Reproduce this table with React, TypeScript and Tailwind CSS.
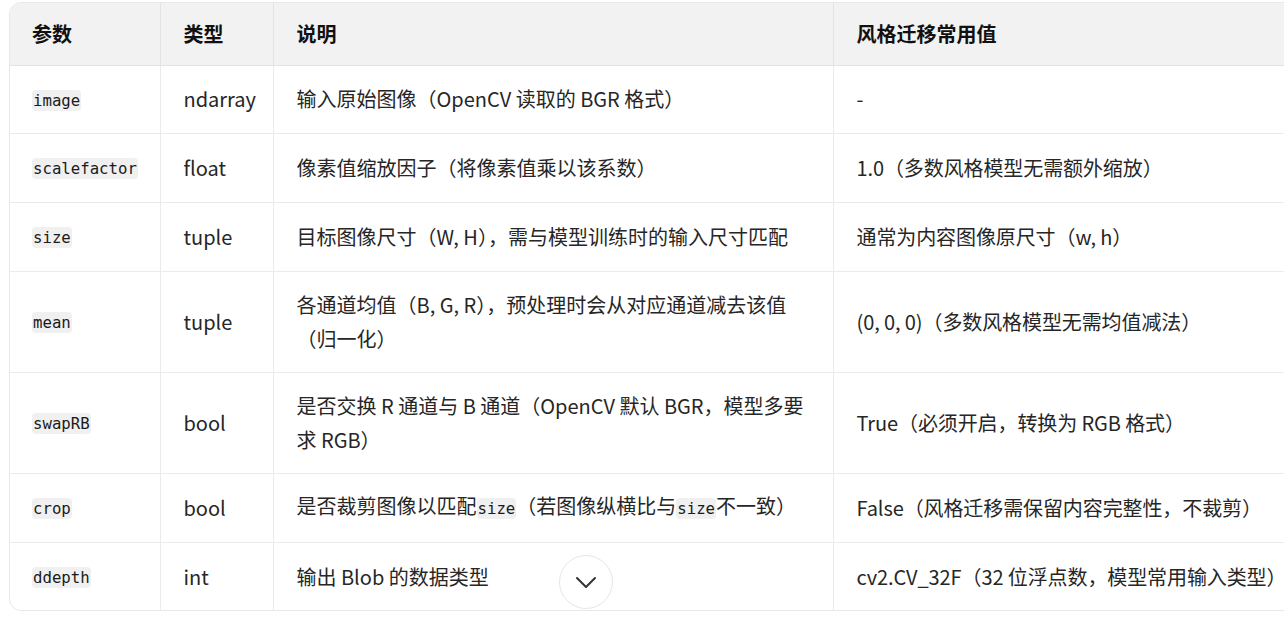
const rows: { name: string; type: string; desc: React.ReactNode; value: string; h: string }[] = [
  { name: "image", type: "ndarray", desc: "输入原始图像（OpenCV 读取的 BGR 格式）", value: "-", h: "h-[68px]" },
  { name: "scalefactor", type: "float", desc: "像素值缩放因子（将像素值乘以该系数）", value: "1.0（多数风格模型无需额外缩放）", h: "h-[69px]" },
  { name: "size", type: "tuple", desc: "目标图像尺寸（W, H），需与模型训练时的输入尺寸匹配", value: "通常为内容图像原尺寸（w, h）", h: "h-[69px]" },
  { name: "mean", type: "tuple", desc: "各通道均值（B, G, R），预处理时会从对应通道减去该值（归一化）", value: "(0, 0, 0)（多数风格模型无需均值减法）", h: "h-[101px]" },
  { name: "swapRB", type: "bool", desc: "是否交换 R 通道与 B 通道（OpenCV 默认 BGR，模型多要求 RGB）", value: "True（必须开启，转换为 RGB 格式）", h: "h-[101px]" },
  {
    name: "crop",
    type: "bool",
    desc: (
      <>
        是否裁剪图像以匹配<Code>size</Code>（若图像纵横比与<Code>size</Code>不一致）
      </>
    ),
    value: "False（风格迁移需保留内容完整性，不裁剪）",
    h: "h-[69px]",
  },
  { name: "ddepth", type: "int", desc: "输出 Blob 的数据类型", value: "cv2.CV_32F（32 位浮点数，模型常用输入类型）", h: "h-[68px]" },
]

function Code({ children }: { children: React.ReactNode }) {
  return (
    <code className="bg-[#f0f0f0] rounded-[4px] px-px py-px text-[15.7px] text-[#1a1a1a] font-['DejaVu_Sans_Mono','Liberation_Mono',monospace]">
      {children}
    </code>
  )
}

export default function App() {
  return (
    <div className="relative w-[1284px] h-[625px] overflow-hidden bg-white font-['Noto_Sans_CJK_SC','Noto_Sans',sans-serif] text-[20px] leading-[33.5px] text-[#262626]">
      <div className="ml-[9px] mt-[2px] w-[1330px] border border-[#e8e8e8] rounded-[12px] overflow-hidden">
        <table className="w-full table-fixed border-collapse">
          <colgroup>
            <col className="w-[150px]" />
            <col className="w-[113px]" />
            <col className="w-[560px]" />
            <col />
          </colgroup>
          <thead>
            <tr className="bg-[#f2f2f2] h-[62px]">
              <th className="text-left font-bold text-[#111] px-[22px] border-r border-[#e3e3e3]">参数</th>
              <th className="text-left font-bold text-[#111] px-[23px] border-r border-[#e3e3e3]">类型</th>
              <th className="text-left font-bold text-[#111] px-[23px] border-r border-[#e3e3e3]">说明</th>
              <th className="text-left font-bold text-[#111] px-[23px]">风格迁移常用值</th>
            </tr>
          </thead>
          <tbody>
            {rows.map((r, i) => (
              <tr key={r.name} className={`${r.h} border-t ${i === 0 ? "border-[#e3e3e3]" : "border-[#ebebeb]"}`}>
                <td className="px-[22px] py-[10px] border-r border-[#ebebeb] align-middle">
                  <Code>{r.name}</Code>
                </td>
                <td className="px-[23px] py-[10px] border-r border-[#ebebeb]">{r.type}</td>
                <td className="px-[23px] py-[10px] border-r border-[#ebebeb]">{r.desc}</td>
                <td className="px-[23px] py-[10px] tracking-[-0.1px]">{r.value}</td>
              </tr>
            ))}
          </tbody>
        </table>
      </div>
      {/* scroll down button */}
      <button className="absolute left-[559px] top-[555px] w-[54px] h-[54px] rounded-full bg-white border border-[#e6e6e6] flex items-center justify-center">
        <svg width="22" height="14" viewBox="0 0 22 14" fill="none">
          <path d="M2 3 L11 12 L20 3" stroke="#333" strokeWidth="2" strokeLinecap="round" strokeLinejoin="round" />
        </svg>
      </button>
    </div>
  )
}
